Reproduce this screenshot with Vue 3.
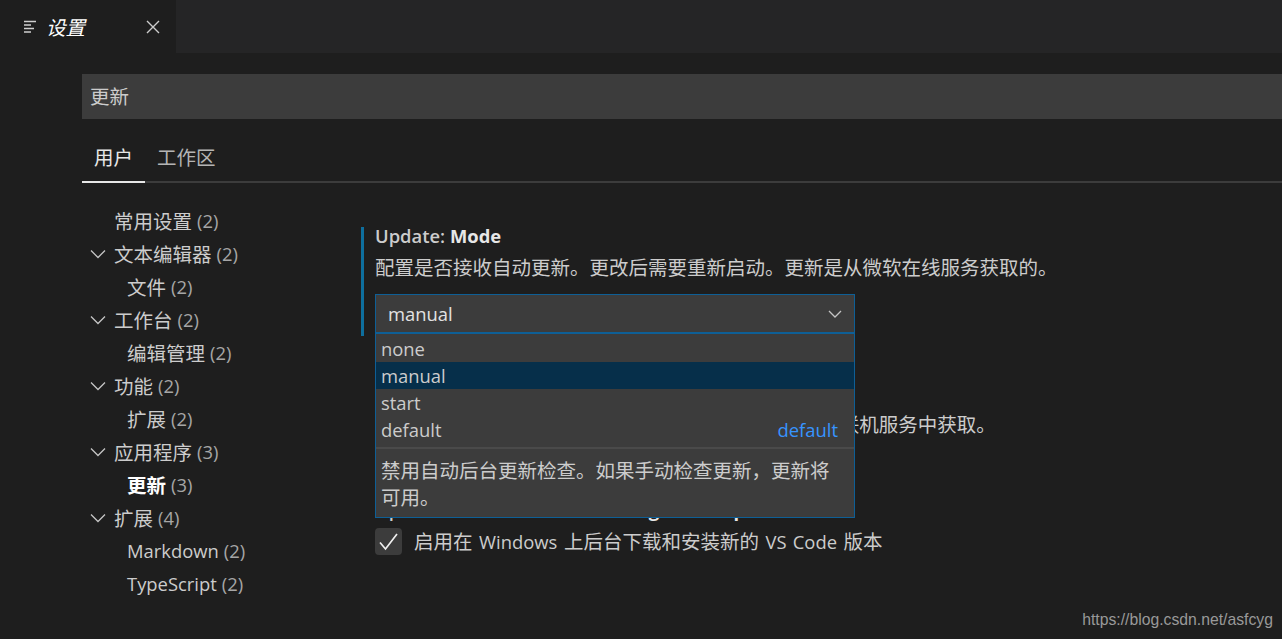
<template>
  <div class="editor">
    <div class="tabs-bar">
      <div class="editor-tab">
        <svg class="tab-icon" width="14" height="14" viewBox="0 0 14 14">
          <path d="M1 1.5h12M1 5h7M1 8.5h10M1 12h7" stroke="#d0d0d0" stroke-width="1.6" fill="none" />
        </svg>
        <span class="tab-title">设置</span>
        <svg class="tab-close" width="14" height="14" viewBox="0 0 14 14">
          <path d="M1 1l12 12M13 1L1 13" stroke="#cccccc" stroke-width="1.4" fill="none" />
        </svg>
      </div>
    </div>

    <div class="settings">
      <div class="search">更新</div>
      <div class="scope-tabs">
        <div class="scope-tab active">用户</div>
        <div class="scope-tab">工作区</div>
      </div>

      <div class="body">
        <ul class="toc">
          <li
            v-for="item in toc"
            :key="item.id"
            class="toc-row"
            :class="{ sub: item.sub, selected: item.selected }"
          >
            <svg v-if="item.open" class="toc-arrow" width="16" height="10" viewBox="0 0 16 10">
              <path d="M1 1.5l7 7 7-7" stroke="#c5c5c5" stroke-width="1.3" fill="none" />
            </svg>
            <span class="toc-label" :class="{ en: item.en }">{{ item.label }}</span>
            <span class="toc-count en">({{ item.count }})</span>
          </li>
        </ul>

        <div class="list">
          <div class="setting focused">
            <div class="setting-title en">Update: <b>Mode</b></div>
            <div class="setting-desc">配置是否接收自动更新。更改后需要重新启动。更新是从微软在线服务获取的。</div>
            <div class="select">
              <span class="en">manual</span>
              <svg width="14" height="8" viewBox="0 0 14 8">
                <path d="M1 1l6 6 6-6" stroke="#c5c5c5" stroke-width="1.3" fill="none" />
              </svg>
            </div>

            <div class="dropdown">
              <div
                v-for="opt in options"
                :key="opt"
                class="option en"
                :class="{ current: opt === 'manual' }"
              >
                <span>{{ opt }}</span>
                <span v-if="opt === 'default'" class="default-tag">default</span>
              </div>
              <div class="option-desc">禁用自动后台更新检查。如果手动检查更新，更新将可用。</div>
            </div>
          </div>

          <div class="setting check-setting">
            <div class="setting-title en">Update: <b>Show Release Notes</b></div>
            <div class="check-row">
              <div class="checkbox"></div>
              <span class="check-label">在更新后显示发行说明。发行说明将从 <span class="en">Microsoft</span> 联机服务中获取。</span>
            </div>
          </div>

          <div class="setting check-setting">
            <div class="setting-title en">Update: <b>Enable Windows Background Updates</b></div>
            <div class="check-row">
              <div class="checkbox">
                <svg width="21" height="19" viewBox="0 0 21 19">
                  <path d="M2 10.5l5.5 6.5L19 2" stroke="#f0f0f0" stroke-width="1.7" fill="none" />
                </svg>
              </div>
              <span class="check-label">启用在 <span class="en">Windows</span> 上后台下载和安装新的 <span class="en">VS Code</span> 版本</span>
            </div>
          </div>
        </div>
      </div>
    </div>

    <div class="watermark">https://blog.csdn.net/asfcyg</div>
  </div>
</template>

<script setup>
const toc = [
  { id: 1, label: '常用设置', count: 2 },
  { id: 2, label: '文本编辑器', count: 2, open: true },
  { id: 3, label: '文件', count: 2, sub: true },
  { id: 4, label: '工作台', count: 2, open: true },
  { id: 5, label: '编辑管理', count: 2, sub: true },
  { id: 6, label: '功能', count: 2, open: true },
  { id: 7, label: '扩展', count: 2, sub: true },
  { id: 8, label: '应用程序', count: 3, open: true },
  { id: 9, label: '更新', count: 3, sub: true, selected: true },
  { id: 10, label: '扩展', count: 4, open: true },
  { id: 11, label: 'Markdown', count: 2, sub: true, en: true },
  { id: 12, label: 'TypeScript', count: 2, sub: true, en: true },
]

const options = ['none', 'manual', 'start', 'default']
</script>

<style>
html,
body {
  margin: 0;
  height: 100%;
  overflow: hidden;
  background: #1e1e1e;
}
</style>

<style scoped>
.editor {
  position: relative;
  height: 639px;
  overflow: hidden;
  background: #1e1e1e;
  color: #cccccc;
  font-family: "Open Sans", "Noto Sans CJK SC", sans-serif;
  font-size: 19.5px;
}
.en {
  font-size: 18.4px;
}
.tabs-bar {
  height: 53px;
  background: #252526;
}
.editor-tab {
  width: 176px;
  height: 53px;
  background: #1e1e1e;
  display: flex;
  align-items: center;
  box-sizing: border-box;
  padding-left: 23px;
}
.tab-icon {
  margin-right: 9px;
}
.tab-title {
  width: 100px;
  color: #ffffff;
  font-style: italic;
}
.settings {
  padding-left: 82px;
}
.search {
  margin-top: 21px;
  height: 45px;
  line-height: 46px;
  background: #3c3c3c;
  padding-left: 8px;
}
.scope-tabs {
  display: flex;
  margin-top: 20px;
  border-bottom: 2px solid #3c3c3c;
  height: 42px;
}
.scope-tab {
  padding: 0 12px;
  line-height: 38px;
  height: 44px;
  box-sizing: border-box;
  color: #b4b4b4;
}
.scope-tab.active {
  color: #e7e7e7;
  border-bottom: 2px solid #e7e7e7;
}
.body {
  display: flex;
  margin-top: 21px;
}
.toc {
  list-style: none;
  margin: 0;
  padding: 0;
  width: 279px;
  flex-shrink: 0;
}
.toc-row {
  display: flex;
  align-items: center;
  height: 33px;
  padding-left: 32px;
  position: relative;
  white-space: nowrap;
}
.toc-row.sub {
  padding-left: 45px;
}
.toc-arrow {
  position: absolute;
  left: 8px;
  top: 12px;
}
.toc-count {
  margin-left: 5px;
  color: #a6a6a6;
}
.selected .toc-label {
  font-weight: 700;
  color: #ffffff;
}
.list {
  flex: 1;
  padding-top: 23px;
  min-width: 0;
}
.setting {
  position: relative;
  padding-left: 14px;
  width: 480px;
}
.setting.focused {
  height: 109px;
}
.setting.focused::before {
  content: "";
  position: absolute;
  left: 0;
  top: 0;
  width: 3px;
  height: 109px;
  background: #0e6f9e;
}
.setting-title {
  height: 18px;
  line-height: 18px;
  font-weight: 600;
  white-space: nowrap;
}
.setting-title b {
  font-weight: 700;
  color: #e7e7e7;
}
.setting-desc {
  margin-top: 9px;
  line-height: 27px;
  white-space: nowrap;
}
.select {
  margin-top: 13px;
  height: 39px;
  box-sizing: border-box;
  border: 1px solid #0e5f96;
  background: #3c3c3c;
  color: #e2e2e2;
  display: flex;
  align-items: center;
  justify-content: space-between;
  padding: 0 12px;
}
.dropdown {
  position: absolute;
  z-index: 2;
  left: 14px;
  top: 106px;
  width: 480px;
  box-sizing: border-box;
  background: #3c3c3c;
  border: 1px solid #0e5f96;
  padding-top: 1px;
}
.option {
  height: 27px;
  line-height: 27px;
  padding: 0 16px 0 5px;
  display: flex;
  justify-content: space-between;
}
.option.current {
  background: #062f4a;
}
.default-tag {
  color: #3794ff;
}
.option-desc {
  margin-top: 4px;
  border-top: 2px solid #4a4a4a;
  padding: 8px 18px 6px 5px;
  line-height: 27px;
}
.check-setting {
  padding-bottom: 15px;
  margin-top: 48px;
}
.check-row {
  display: flex;
  align-items: center;
  margin-top: 9px;
  height: 27px;
  gap: 12px;
  white-space: nowrap;
  word-spacing: 1.5px;
}
.check-label {
  margin-bottom: 3px;
}
.checkbox {
  width: 27px;
  height: 27px;
  flex-shrink: 0;
  border-radius: 4px;
  background: #3c3c3c;
  display: flex;
  align-items: center;
  justify-content: center;
}
.watermark {
  position: absolute;
  right: 9px;
  bottom: 10px;
  font-family: "Liberation Sans", sans-serif;
  font-size: 15.75px;
  color: #999999;
}
</style>
